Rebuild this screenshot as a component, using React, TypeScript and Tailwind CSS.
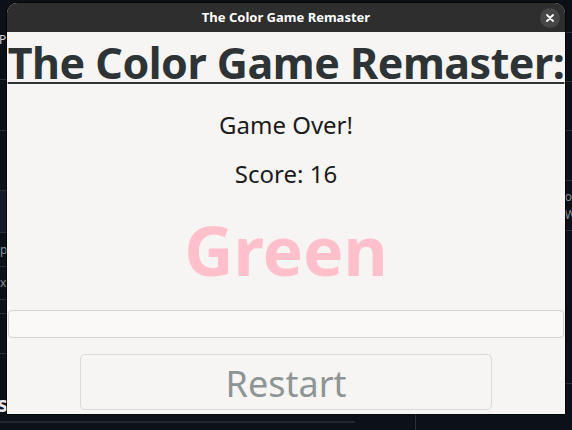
import React from "react";

const sans = { fontFamily: '"Noto Sans", "Open Sans", sans-serif' };

type Row = { h: number; text?: string; cls?: string; tint?: boolean };

const leftRows: Row[] = [
  { h: 80, text: "P", cls: "items-center text-[12px] text-[#d0d3d8] -ml-[1px]" },
  { h: 51 },
  { h: 60 },
  { h: 42, tint: true },
  { h: 34, text: "p", cls: "items-center text-[12px] text-[#8a8f98]" },
  { h: 33, text: "x", cls: "items-center text-[12px] text-[#8a8f98]" },
  { h: 14 },
  { h: 40 },
  { h: 76, text: "s", cls: "items-end pb-[9px] text-[22px] font-bold text-[#e6e8eb] -ml-[3px]" },
];

const rightRows: Row[] = [
  { h: 33 },
  { h: 49 },
  { h: 49 },
  { h: 50 },
  { h: 50, text: "o\nW", cls: "items-center justify-end whitespace-pre text-[12px] leading-[18px] text-[#8a8f98] -mr-[4px]" },
  { h: 153 },
];

function Strip({ rows, side }: { rows: Row[]; side: "left" | "right" }) {
  return (
    <div className="flex w-[8px] flex-col">
      {rows.map((r, i) => (
        <div
          key={i}
          className={`flex shrink-0 border-b border-[#2a2f38] ${r.tint ? "bg-[#161c27]" : ""} ${r.cls ?? ""} ${
            side === "right" ? "justify-end" : ""
          }`}
          style={{ height: r.h }}
        >
          {r.text}
        </div>
      ))}
    </div>
  );
}

function Backdrop() {
  // Partly hidden application behind the dialog
  return (
    <div className="absolute inset-0 flex flex-col bg-[#0c1017]" style={sans}>
      <div className="flex h-[414px] justify-between overflow-hidden">
        <Strip rows={leftRows} side="left" />
        <Strip rows={rightRows} side="right" />
      </div>
      <div className="flex flex-1">
        <div className="mt-[7px] h-[2px] w-[355px] bg-[#232830]" />
        <div className="ml-[60px] w-px bg-[#2a2f38]" />
      </div>
    </div>
  );
}

function CloseButton() {
  return (
    <div className="flex h-[20px] w-[20px] items-center justify-center rounded-full bg-[#474747]">
      <svg width="10" height="10" viewBox="0 0 10 10">
        <path d="M2 2 L8 8 M8 2 L2 8" stroke="#ffffff" strokeWidth="1.8" strokeLinecap="round" />
      </svg>
    </div>
  );
}

export default function App() {
  return (
    <div className="relative h-[430px] w-[572px] overflow-hidden">
      <Backdrop />

      <div
        className="absolute left-[7px] top-[3px] flex h-[411px] w-[558px] flex-col overflow-hidden rounded-t-[10px] bg-[#f6f5f4] shadow-[0_0_0_1px_rgba(0,0,0,0.6)]"
        style={sans}
      >
        {/* header bar */}
        <div className="flex h-[29px] shrink-0 items-center justify-between bg-[#2e2e2e] px-[5px]">
          <div className="w-[20px]" />
          <span className="text-[13px] font-bold text-white">The Color Game Remaster</span>
          <CloseButton />
        </div>

        {/* heading */}
        <div className="flex h-[57px] shrink-0 justify-center overflow-hidden">
          <span className="mt-[5px] whitespace-nowrap text-[43px] font-bold leading-[52px] tracking-[-0.5px] text-[#2e3436] underline decoration-[2px] underline-offset-[3px]">
            The Color Game Remaster:
          </span>
        </div>

        <div className="flex flex-1 flex-col items-center">
          <div className="mt-[20px] text-[24px] leading-[32px] text-[#1c1c1c]">Game Over!</div>
          <div className="mt-[17px] text-[24px] leading-[32px] text-[#1c1c1c]">Score: 16</div>
          <div className="mt-[20px] text-[68px] font-bold leading-[80px] text-[#ffc0cb]">Green</div>

          {/* answer entry */}
          <div className="mt-[20px] h-[28px] w-[556px] rounded-[4px] border border-[#d6d1cd] bg-[#faf9f8]" />

          {/* restart button */}
          <div className="mt-[16px] flex h-[56px] w-[412px] items-center justify-center rounded-[5px] border border-[#dcd8d4] bg-[#f6f5f4]">
            <span className="mt-[3px] text-[36px] leading-none text-[#8f9494]">Restart</span>
          </div>
        </div>
      </div>
    </div>
  );
}
